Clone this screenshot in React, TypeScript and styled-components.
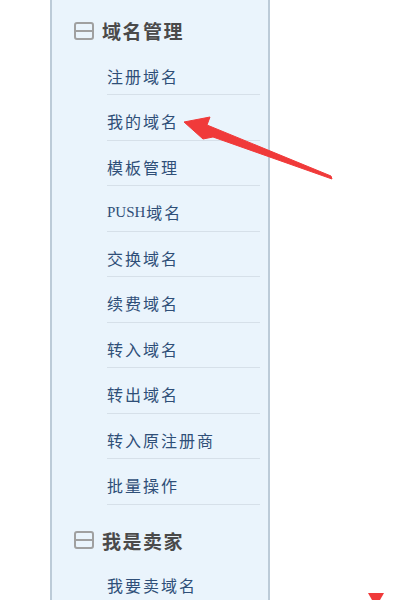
import React from "react";
import styled, { createGlobalStyle } from "styled-components";

const Global = createGlobalStyle`
  html, body { margin: 0; padding: 0; background: #ffffff; }
  body { width: 414px; height: 600px; overflow: hidden; }
`;

const Page = styled.div`
  position: relative;
  width: 414px;
  height: 600px;
  padding-left: 50px;
  box-sizing: border-box;
  overflow: hidden;
`;

const Sidebar = styled.nav`
  width: 220px;
  min-height: 600px;
  box-sizing: border-box;
  background: #eaf4fc;
  border-left: 2px solid #bccbd8;
  border-right: 2px solid #bccbd8;
  display: flex;
  flex-direction: column;
`;

const Group = styled.section<{ $first?: boolean }>`
  display: flex;
  flex-direction: column;
  margin-top: ${(p) => (p.$first ? 0 : 5)}px;
`;

const GroupHeader = styled.div`
  height: 49.5px;
  box-sizing: border-box;
  padding: 12px 0 0 22px;
  display: flex;
  align-items: center;
  gap: 8px;
  font-family: "Noto Sans CJK SC", "Noto Sans", sans-serif;
  font-weight: 700;
  font-size: 19px;
  letter-spacing: 1.5px;
  color: #4a4a4a;
`;

const Item = styled.a<{ $last?: boolean }>`
  height: 45.5px;
  box-sizing: border-box;
  margin: 0 8px 0 55px;
  padding-top: 8px;
  display: flex;
  align-items: center;
  border-bottom: 1px solid ${(p) => (p.$last ? "transparent" : "#d6e0e9")};
  font-family: "Liberation Serif", "Noto Sans CJK SC", serif;
  font-size: 16px;
  letter-spacing: 2px;
  color: #2f4f78;
  text-decoration: none;
`;

const Latin = styled.span`
  font-size: 15px;
  letter-spacing: 0;
  margin-right: 1px;
`;

const Overlay = styled.svg`
  position: absolute;
  top: 0;
  left: 0;
  pointer-events: none;
`;

const CollapseIcon = () => (
  <svg width="20" height="18" viewBox="0 0 20 18">
    <rect x="1" y="1" width="18" height="16" rx="2" fill="none" stroke="#a0a0a0" strokeWidth="2" />
    <line x1="1.5" y1="9" x2="18.5" y2="9" stroke="#a0a0a0" strokeWidth="2" />
  </svg>
);

const renderLabel = (s: string) =>
  s.split(/([A-Za-z]+)/).filter(Boolean).map((part, i) =>
    /^[A-Za-z]+$/.test(part) ? <Latin key={i}>{part}</Latin> : <React.Fragment key={i}>{part}</React.Fragment>
  );

const groups = [
  {
    title: "域名管理",
    items: [
      "注册域名",
      "我的域名",
      "模板管理",
      "PUSH域名",
      "交换域名",
      "续费域名",
      "转入域名",
      "转出域名",
      "转入原注册商",
      "批量操作",
    ],
  },
  { title: "我是卖家", items: ["我要卖域名"] },
];

export default function App() {
  return (
    <Page>
      <Global />
      <Sidebar>
        {groups.map((g, gi) => (
          <Group key={g.title} $first={gi === 0}>
            <GroupHeader>
              <CollapseIcon />
              <span>{g.title}</span>
            </GroupHeader>
            {g.items.map((it, ii) => (
              <Item key={it} href="#" $last={gi === groups.length - 1 && ii === g.items.length - 1}>
                {renderLabel(it)}
              </Item>
            ))}
          </Group>
        ))}
      </Sidebar>
      <Overlay width="414" height="600" viewBox="0 0 414 600">
        <polygon
          points="184,122 210,117 207,125 331,176 332,179 213,137 203,139"
          fill="#f03a3a"
          stroke="#f03a3a"
          strokeWidth="1"
          strokeLinejoin="round"
        />
        <polygon points="368,593 384,593 380,600 372,600" fill="#f03a3a" />
      </Overlay>
    </Page>
  );
}
